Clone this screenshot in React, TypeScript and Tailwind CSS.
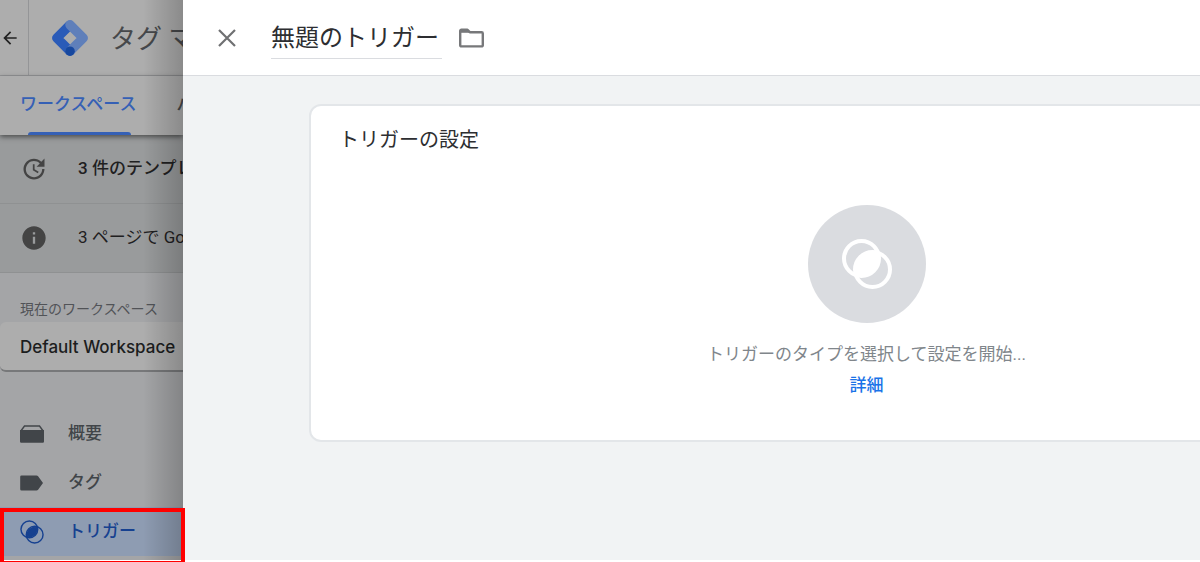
import { clsx } from 'clsx';
import { MdArrowBack, MdInfo, MdUpdate } from 'react-icons/md';

interface TriggerIconProps {
  className: string;
  stroke: number;
}

function TriggerIcon({ className, stroke }: TriggerIconProps) {
  return (
    <svg viewBox="0 0 50 50" className={className} fill="none" stroke="currentColor" strokeWidth={stroke} aria-hidden="true">
      <circle cx="19.5" cy="19.5" r="17.5" />
      <circle cx="30.5" cy="30.5" r="17.5" />
      <path d="M34.9 15.1 A17.5 17.5 0 0 1 15.1 34.9 A17.5 17.5 0 0 1 34.9 15.1 Z" fill="currentColor" />
    </svg>
  );
}

function OverviewIcon() {
  return (
    <svg viewBox="0 0 24 18" className="h-[18px] w-6" aria-hidden="true">
      <path d="M1.2 5.5 L4.5 1 H19.5 L22.8 5.5" fill="none" stroke="currentColor" strokeWidth="1.4" />
      <path d="M0 5 H24 V16.5 a1.2 1.2 0 0 1 -1.2 1.2 H1.2 A1.2 1.2 0 0 1 0 16.5 Z" fill="currentColor" />
    </svg>
  );
}

function TagIcon() {
  return (
    <svg viewBox="0 0 24 16" className="h-4 w-6" aria-hidden="true">
      <path d="M1.5 0.5 H16.5 a2 2 0 0 1 1.6 0.8 L23 8 L18.1 14.7 a2 2 0 0 1 -1.6 0.8 H1.5 A1.3 1.3 0 0 1 0.2 14.2 V1.8 A1.3 1.3 0 0 1 1.5 0.5 Z" fill="currentColor" />
    </svg>
  );
}

function CloseIcon() {
  return (
    <svg viewBox="0 0 24 24" className="size-6" fill="none" stroke="currentColor" strokeWidth="2.2" aria-hidden="true">
      <path d="M4 4 L20 20 M20 4 L4 20" />
    </svg>
  );
}

function FolderIcon() {
  return (
    <svg viewBox="0 0 28 28" className="size-7" fill="none" stroke="currentColor" strokeWidth="2.4" strokeLinejoin="round" aria-hidden="true">
      <path d="M3.2 7 a1.2 1.2 0 0 1 1.2 -1.2 H10.5 L12.8 8.2 H24.6 a1.2 1.2 0 0 1 1.2 1.2 V21.2 a1.2 1.2 0 0 1 -1.2 1.2 H4.4 a1.2 1.2 0 0 1 -1.2 -1.2 Z" />
      <path d="M4 7.6 H12" />
    </svg>
  );
}

function TagManagerLogo() {
  return (
    <svg viewBox="0 0 36 36" className="size-9 shrink-0" fill="none" strokeWidth="9.5" strokeLinejoin="round" aria-hidden="true">
      <path d="M18 4.8 L4.8 18 L18 31.2" stroke="#2a5bb8" />
      <path d="M18 4.8 L31.2 18 L18 31.2" stroke="#5f7fba" strokeLinecap="round" />
      <circle cx="18" cy="31.2" r="4.8" fill="#17489f" />
    </svg>
  );
}

const navItems = [
  { label: '概要', icon: <OverviewIcon />, active: false },
  { label: 'タグ', icon: <TagIcon />, active: false },
  { label: 'トリガー', icon: <TriggerIcon className="size-6" stroke={3} />, active: true },
];

const notices = [
  { text: '3 件のテンプレートを更新できます', icon: <MdUpdate className="size-7" />, strong: true },
  { text: '3 ページで Google タグが検出されません', icon: <MdInfo className="size-7" />, strong: false },
];

function Sidebar() {
  return (
    <div className="relative h-full w-[183px] shrink-0">
      <div className="h-full overflow-hidden bg-[#a4a5a7] whitespace-nowrap">
        <header className="flex h-[76px] items-center border-b border-[#949597] bg-[#adadad]">
          <button type="button" aria-label="戻る" className="flex h-full w-[29px] shrink-0 items-center border-r border-[#949597] text-[#222]">
            <MdArrowBack className="size-5" />
          </button>
          <div className="flex items-center gap-[22px] pl-[23px]">
            <TagManagerLogo />
            <span className="pt-1 text-[26px] text-[#46484b]">タグ マネージャー</span>
          </div>
        </header>

        <nav className="relative flex h-[59px] gap-10 bg-[#adadad] pl-5 text-[17px] font-medium shadow-[0_2px_5px_rgba(0,0,0,0.5)]">
          <a href="#workspace" className="flex flex-col justify-between pt-4 text-[#3560b5]">
            ワークスペース
            <span className="ml-2 h-[3px] w-[103px] rounded-t-sm bg-[#3560b5]" />
          </a>
          <a href="#versions" className="pt-4 text-[#46484b]">バージョン</a>
        </nav>

        {notices.map(notice => (
          <div key={notice.text} className="flex h-[69px] items-center gap-[30px] border-b border-[#8f9192] bg-[#999b9c] pl-5 text-[#444]">
            <span className="shrink-0">{notice.icon}</span>
            <span className={clsx('text-[17px] text-[#1f2021]', notice.strong && 'font-medium')}>{notice.text}</span>
          </div>
        ))}

        <p id="workspace-label" className="pt-6 pl-5 text-sm leading-6 text-[#515357]">現在のワークスペース</p>
        <button
          type="button"
          aria-describedby="workspace-label"
          className="mt-px h-[50px] w-[280px] rounded-md border-b-2 border-[#77787a] bg-[#adadad] pt-1 pl-5 text-left font-[Inter,sans-serif] text-[17px] font-medium text-[#1c1d1e]"
        >
          Default Workspace
        </button>

        <nav className="mt-[37px]">
          {navItems.map(item => (
            <a
              key={item.label}
              href="#"
              className={clsx(
                'flex h-[49px] items-center gap-6 pl-5 text-[17px] font-medium',
                item.active ? 'bg-[#8e9cb2] text-[#164190]' : 'text-[#414549]'
              )}
            >
              <span className="flex w-6 justify-center">{item.icon}</span>
              {item.label}
            </a>
          ))}
        </nav>
      </div>

      {/* Shadow cast by the panel */}
      <div className="pointer-events-none absolute inset-y-0 right-0 w-10 bg-linear-to-r from-transparent to-black/20" />
      {/* Callout around the trigger item */}
      <div className="pointer-events-none absolute top-[508px] -right-[2px] left-0 z-10 h-[57px] border-4 border-[#ff0000]" />
    </div>
  );
}

function TriggerPanel() {
  return (
    <main className="min-w-0 flex-1 overflow-hidden bg-[#f1f3f4]">
      <header className="flex h-[76px] items-center border-b border-[#dadce0] bg-white pl-8">
        <button type="button" aria-label="閉じる" className="text-[#6f7072]">
          <CloseIcon />
        </button>
        <input
          aria-label="トリガー名"
          defaultValue="無題のトリガー"
          className="ml-8 h-[42px] w-[171px] border-b border-[#dadce0] pb-1 text-2xl text-[#2d2e31]"
        />
        <button type="button" aria-label="フォルダ" className="ml-[15px] text-[#77787a]">
          <FolderIcon />
        </button>
      </header>

      <section className="mt-7 -mr-56 ml-[126px] rounded-xl border-2 border-[#e3e6e9] bg-white px-7 pt-5 pb-[39px]">
        <h2 className="text-xl leading-7 text-[#2d2e31]">トリガーの設定</h2>
        <div className="mt-[51px] flex flex-col items-center text-[17px]">
          <div className="flex size-[118px] items-center justify-center rounded-full bg-[#dadce0] text-white">
            <TriggerIcon className="size-[50px]" stroke={4} />
          </div>
          <p className="mt-4 leading-[31px] text-[#80868b]">トリガーのタイプを選択して設定を開始...</p>
          <a href="#details" className="leading-[31px] font-medium text-[#1a73e8]">詳細</a>
        </div>
      </section>
    </main>
  );
}

export default function App() {
  return (
    <div className="flex h-screen overflow-hidden bg-white pb-[2px] font-[Roboto,'Noto_Sans_CJK_JP',sans-serif]">
      <Sidebar />
      <TriggerPanel />
    </div>
  );
}
